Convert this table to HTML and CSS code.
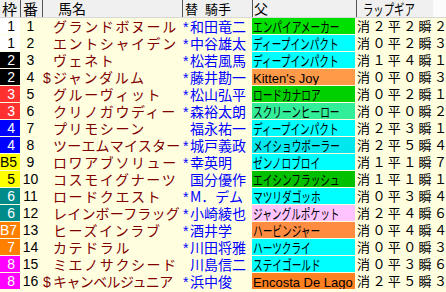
FILE: index.html
```html
<!DOCTYPE html>
<html lang="ja">
<head>
<meta charset="utf-8">
<title>出馬表</title>
<link rel="stylesheet" href="styles.css">
</head>
<body>
<div class="table">
  <div class="head">
    <div class="h h-waku">枠</div>
    <div class="h h-ban">番</div>
    <div class="h h-name">馬名</div>
    <div class="h h-jockey">替<span class="h-gap"></span>騎手</div>
    <div class="h h-sire">父</div>
    <div class="h h-gear"><span class="cond">ラップギア</span></div>
    <div class="h-rest"></div>
  </div>
  <div class="rows">
    <div class="row"><div class="waku w1">1</div><div class="ban">1</div><div class="name"><span class="mark"></span>グランドボヌール</div><div class="jockey"><span class="star">*</span>和田竜二</div><div class="sire s-green"><span class="cond">エンパイアメーカー</span></div><div class="gear">消２平２瞬２</div></div>
    <div class="row"><div class="waku w1">1</div><div class="ban">2</div><div class="name"><span class="mark"></span>エントシャイデン</div><div class="jockey"><span class="star">*</span>中谷雄太</div><div class="sire s-cyan"><span class="cond">ディープインパクト</span></div><div class="gear">消０平２瞬３</div></div>
    <div class="row"><div class="waku w2">2</div><div class="ban">3</div><div class="name"><span class="mark"></span>ヴェネト</div><div class="jockey"><span class="star">*</span>松若風馬</div><div class="sire s-cyan"><span class="cond">ディープインパクト</span></div><div class="gear">消１平４瞬１</div></div>
    <div class="row"><div class="waku w2">2</div><div class="ban">4</div><div class="name"><span class="mark">$</span>ジャンダルム</div><div class="jockey"><span class="star">*</span>藤井勘一</div><div class="sire s-lorange"><span class="latin">Kitten's Joy</span></div><div class="gear">消０平０瞬３</div></div>
    <div class="row"><div class="waku w3">3</div><div class="ban">5</div><div class="name"><span class="mark"></span>グルーヴィット</div><div class="jockey"><span class="star">*</span>松山弘平</div><div class="sire s-green2"><span class="cond">ロードカナロア</span></div><div class="gear">消０平２瞬１</div></div>
    <div class="row"><div class="waku w3">3</div><div class="ban">6</div><div class="name"><span class="mark"></span>クリノガウディー</div><div class="jockey"><span class="star">*</span>森裕太朗</div><div class="sire s-sea"><span class="cond">スクリーンヒーロー</span></div><div class="gear">消０平０瞬２</div></div>
    <div class="row"><div class="waku w4">4</div><div class="ban">7</div><div class="name"><span class="mark"></span>プリモシーン</div><div class="jockey"><span class="star"></span>福永祐一</div><div class="sire s-cyan"><span class="cond">ディープインパクト</span></div><div class="gear">消２平３瞬１</div></div>
    <div class="row"><div class="waku w4">4</div><div class="ban">8</div><div class="name tight"><span class="mark"></span>ツーエムマイスター</div><div class="jockey"><span class="star">*</span>城戸義政</div><div class="sire s-cyan2"><span class="cond">メイショウボーラー</span></div><div class="gear">消２平５瞬４</div></div>
    <div class="row"><div class="waku w5">B5</div><div class="ban">9</div><div class="name"><span class="mark"></span>ロワアブソリュー</div><div class="jockey"><span class="star">*</span>幸英明</div><div class="sire s-cyan"><span class="cond">ゼンノロブロイ</span></div><div class="gear">消１平１瞬７</div></div>
    <div class="row"><div class="waku w5">5</div><div class="ban">10</div><div class="name"><span class="mark"></span>コスモイグナーツ</div><div class="jockey"><span class="star"></span>国分優作</div><div class="sire s-green3"><span class="cond">エイシンフラッシュ</span></div><div class="gear">消１平１瞬１</div></div>
    <div class="row"><div class="waku w6">6</div><div class="ban">11</div><div class="name"><span class="mark"></span>ロードクエスト</div><div class="jockey"><span class="star">*</span>M．デム</div><div class="sire s-cyan"><span class="cond">マツリダゴッホ</span></div><div class="gear">消０平３瞬４</div></div>
    <div class="row"><div class="waku w6">6</div><div class="ban">12</div><div class="name tight"><span class="mark"></span>レインボーフラッグ</div><div class="jockey"><span class="star">*</span>小崎綾也</div><div class="sire s-pink"><span class="cond">ジャングルポケット</span></div><div class="gear">消２平４瞬６</div></div>
    <div class="row"><div class="waku w7">B7</div><div class="ban">13</div><div class="name"><span class="mark"></span>ヒーズインラブ</div><div class="jockey"><span class="star">*</span>酒井学</div><div class="sire s-orange"><span class="cond">ハービンジャー</span></div><div class="gear">消０平４瞬４</div></div>
    <div class="row"><div class="waku w7">7</div><div class="ban">14</div><div class="name"><span class="mark"></span>カテドラル</div><div class="jockey"><span class="star">*</span>川田将雅</div><div class="sire s-cyan"><span class="cond">ハーツクライ</span></div><div class="gear">消０平０瞬３</div></div>
    <div class="row"><div class="waku w8">8</div><div class="ban">15</div><div class="name"><span class="mark"></span>ミエノサクシード</div><div class="jockey"><span class="star"></span>川島信二</div><div class="sire s-cyan"><span class="cond">ステイゴールド</span></div><div class="gear">消０平３瞬６</div></div>
    <div class="row"><div class="waku w8">8</div><div class="ban">16</div><div class="name tighter"><span class="mark">$</span>キャンベルジュニア</div><div class="jockey"><span class="star">*</span>浜中俊</div><div class="sire s-orange2"><span class="latin">Encosta De Lago</span></div><div class="gear">消２平５瞬３</div></div>
  </div>
</div>
</body>
</html>
```
FILE: styles.css
```css
html, body {
  margin: 0;
  padding: 0;
  background: #ffffe0;
}
body {
  font-family: "Noto Sans CJK JP", "Liberation Sans", sans-serif;
  font-size: 14px;
  color: #000;
  width: 446px;
  height: 292px;
  overflow: hidden;
}
.table {
  display: flex;
  flex-direction: column;
}
.head {
  display: grid;
  grid-template-columns: 20px 22px 140px 70px 104px 77px 1fr;
  height: 17px;
  border-bottom: 1px solid #d8d8d8;
  background: #fbfbfb;
}
.h {
  background: #f0f0f0;
  height: 17px;
  line-height: 17px;
  font-size: 15px;
  white-space: nowrap;
  overflow: hidden;
  box-sizing: border-box;
}
.h + .h {
  border-left: 1px solid #555;
}
.h-waku { padding-left: 2px; }
.h-ban { padding-left: 2px; }
.h-name { padding-left: 15px; font-size: 14px; }
.h-jockey { padding-left: 2px; font-size: 13px; }
.h-gap { display: inline-block; width: 7px; }
.h-sire { padding-left: 1px; font-size: 14px; }
.h-gear { padding-left: 6px; }
.h-rest { background: #fbfbfb; }

.rows {
  display: flex;
  flex-direction: column;
  gap: 1px;
}
.row {
  display: grid;
  grid-template-columns: 20px 22px 140px 70px 104px 1fr;
  height: 16px;
  line-height: 16px;
  white-space: nowrap;
}
.row > div {
  overflow: hidden;
}
.waku {
  font-family: "Liberation Sans", sans-serif;
  font-size: 14px;
  text-align: right;
  padding-right: 5px;
  color: #fff;
}
.w1 { background: #ffffff; color: #000; }
.w2 { background: #000000; }
.w3 { background: #ff3030; }
.w4 { background: #0000ff; }
.w5 { background: #ffff00; color: #000; }
.w6 { background: #008b8b; }
.w7 { background: #ff8000; }
.w8 { background: #ff00ff; }

.ban {
  font-family: "Liberation Sans", sans-serif;
  font-size: 14px;
  text-align: center;
  padding-right: 1px;
}
.name {
  color: #800000;
  letter-spacing: 1.6px;
  padding-left: 1px;
}
.name.tight { letter-spacing: 0.2px; }
.name.tighter { letter-spacing: -0.6px; }
.mark {
  display: inline-block;
  width: 10px;
  font-family: "Liberation Sans", sans-serif;
  letter-spacing: 0;
}
.jockey {
  color: #0000ff;
  padding-left: 1px;
}
.star {
  display: inline-block;
  width: 7px;
  font-family: "Liberation Sans", sans-serif;
}
.sire {
  margin-right: 1px;
  padding-left: 1px;
}
.cond {
  display: inline-block;
  transform: scaleX(0.69);
  transform-origin: 0 50%;
}
.latin {
  font-family: "Liberation Sans", sans-serif;
  font-size: 13px;
}
.s-green { background: #00e000; }
.s-green2 { background: #00d000; }
.s-green3 { background: #00c000; }
.s-cyan { background: #00ffff; }
.s-cyan2 { background: #00e8ee; }
.s-sea { background: #33ee99; }
.s-lorange { background: #ff9a48; }
.s-orange { background: #ff8c40; }
.s-orange2 { background: #ff8020; }
.s-pink { background: #ffc4ff; }
.gear {
  padding-left: 1px;
  font-size: 13px;
  letter-spacing: 2.4px;
}
```
